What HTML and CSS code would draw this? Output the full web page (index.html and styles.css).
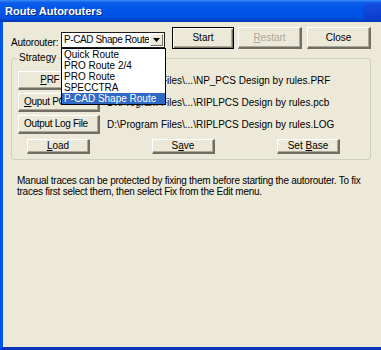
FILE: index.html
```html
<!DOCTYPE html>
<html>
<head>
<meta charset="utf-8">
<link rel="stylesheet" href="styles.css">
</head>
<body>
<div class="window">
  <div class="titlebar">
    <span class="title">Route Autorouters</span>
    <span class="tb-btn"></span>
  </div>
  <div class="client">
    <div class="toprow">
      <span class="lbl">Autorouter:</span>
      <div class="combo">
        <span class="combo-text">P-CAD Shape Route</span>
        <span class="combo-arrow"><svg width="7" height="4" viewBox="0 0 7 4"><path d="M0 0H7L3.5 4Z" fill="#000"/></svg></span>
        <ul class="droplist">
          <li>Quick Route</li>
          <li>PRO Route 2/4</li>
          <li>PRO Route</li>
          <li>SPECCTRA</li>
          <li class="sel">P-CAD Shape Route</li>
        </ul>
      </div>
      <button class="btn btn-default btn-start">Start</button>
      <button class="btn btn-disabled btn-restart"><u>R</u>estart</button>
      <button class="btn btn-close">Close</button>
    </div>
    <div class="group">
      <span class="legend">Strategy</span>
      <div class="filerow">
        <button class="btn btn-file"><u>P</u>RF File</button>
        <span class="path">D:\Program Files\...\NP_PCS Design by rules.PRF</span>
      </div>
      <div class="filerow">
        <button class="btn btn-file btn-left"><u>O</u>uput PCB File</button>
        <span class="path">D:\Program Files\...\RIPLPCS Design by rules.pcb</span>
      </div>
      <div class="filerow">
        <button class="btn btn-file btn-left">Output Log File</button>
        <span class="path">D:\Program Files\...\RIPLPCS Design by rules.LOG</span>
      </div>
      <div class="actionrow">
        <button class="btn btn-small"><u>L</u>oad</button>
        <button class="btn btn-small">S<u>a</u>ve</button>
        <button class="btn btn-small">Set <u>B</u>ase</button>
      </div>
    </div>
    <p class="note">Manual traces can be protected by fixing them before starting the autorouter. To fix traces first select them, then select Fix from the Edit menu.</p>
  </div>
</div>
</body>
</html>
```

FILE: styles.css
```css
* { box-sizing: border-box; }
html, body { margin: 0; padding: 0; }
body {
  width: 381px;
  height: 350px;
  overflow: hidden;
  background: #ECE9D8;
  font-family: "Liberation Sans", Arial, sans-serif;
  font-size: 10px;
  color: #000;
}
.window {
  width: 381px;
  height: 350px;
  display: flex;
  flex-direction: column;
}
.titlebar {
  height: 22px;
  flex: none;
  display: flex;
  align-items: center;
  justify-content: space-between;
  padding-left: 5px;
  background: linear-gradient(to bottom, #3C8CF7 0%, #0B5DEC 12%, #0055E8 45%, #0052E2 80%, #0043C4 92%, #0036B0 100%);
}
.title {
  color: #fff;
  font-weight: bold;
  font-size: 11px;
  text-shadow: 1px 1px 0 #0A2A8A;
}
.tb-btn {
  width: 21px;
  height: 17px;
  margin-right: -3px;
  border-radius: 4px 0 0 4px;
  background: linear-gradient(to bottom, #1650E0, #0A3CC8);
}
.client {
  flex: 1;
  border-left: 3px solid #0055EA;
  border-bottom: 3px solid #0B33B8;
  display: flex;
  flex-direction: column;
  background: #ECE9D8;
}
.toprow {
  display: flex;
  align-items: flex-start;
  padding: 5px 0 0 8px;
  height: 27px;
}
.lbl {
  width: 50px;
  margin-top: 10px;
  line-height: 12px;
  letter-spacing: -0.2px;
}
.combo {
  position: relative;
  width: 104px;
  height: 16px;
  margin-top: 5px;
  background: #fff;
  border: 1px solid #1C1C1C;
  display: flex;
  align-items: center;
  justify-content: space-between;
}
.combo-text {
  padding-left: 2px;
  line-height: 12px;
  white-space: nowrap;
  overflow: hidden;
  letter-spacing: -0.4px;
}
.combo-arrow {
  flex: none;
  width: 13px;
  height: 12px;
  margin-right: 1px;
  background: #ECE9D8;
  border-top: 1px solid #fff;
  border-left: 1px solid #fff;
  border-right: 1px solid #716F64;
  border-bottom: 1px solid #716F64;
  display: flex;
  align-items: center;
  justify-content: center;
}
.droplist {
  position: absolute;
  left: -1px;
  top: 15px;
  width: 105px;
  margin: 0;
  padding: 0;
  list-style: none;
  background: #fff;
  border: 1px solid #000;
  z-index: 5;
}
.droplist li {
  height: 11px;
  line-height: 11px;
  padding-left: 2px;
  white-space: nowrap;
}
.droplist li.sel {
  background: #316AC5;
  color: #fff;
}
.btn {
  font-family: inherit;
  font-size: 10px;
  color: #000;
  background: #ECE9D8;
  border-style: solid;
  border-width: 1px 2px 2px 1px;
  border-color: #fff #716F64 #716F64 #fff;
  box-shadow: inset -1px -1px 0 #ACA899;
  padding: 0;
  margin: 0;
  line-height: 12px;
  white-space: nowrap;
}
.btn-start, .btn-restart, .btn-close { height: 22px; }
.btn-start { width: 62px; margin-left: 7px; }
.btn-restart { width: 64px; margin-left: 4px; }
.btn-close { width: 64px; margin-left: 5px; }
.btn-default {
  border: 1px solid #000;
  box-shadow: inset 1px 1px 0 #fff, inset -1px -1px 0 #716F64, inset -2px -2px 0 #ACA899;
}
.btn-disabled { color: #ACA899; }
.group {
  position: relative;
  margin: 9px 0 0 8px;
  width: 360px;
  border: 1px solid #D0D0BF;
  border-radius: 3px;
  padding: 12px 6px 5px 6px;
  display: flex;
  flex-direction: column;
  gap: 3px;
}
.legend {
  position: absolute;
  left: 5px;
  top: -7px;
  padding: 0 2px;
  background: #ECE9D8;
  line-height: 12px;
}
.filerow {
  display: flex;
  align-items: center;
  gap: 7px;
}
.btn-file { width: 82px; height: 19px; letter-spacing: -0.3px; }
.btn-left { text-align: left; padding-left: 5px; }
.path { line-height: 12px; white-space: nowrap; }
.actionrow {
  display: flex;
  gap: 62px;
  margin: 2px 0 0 9px;
}
.btn-small { width: 63px; height: 15px; }
.note {
  margin: 15px 0 0 14px;
  width: 362px;
  line-height: 11px;
  letter-spacing: -0.25px;
}
```
